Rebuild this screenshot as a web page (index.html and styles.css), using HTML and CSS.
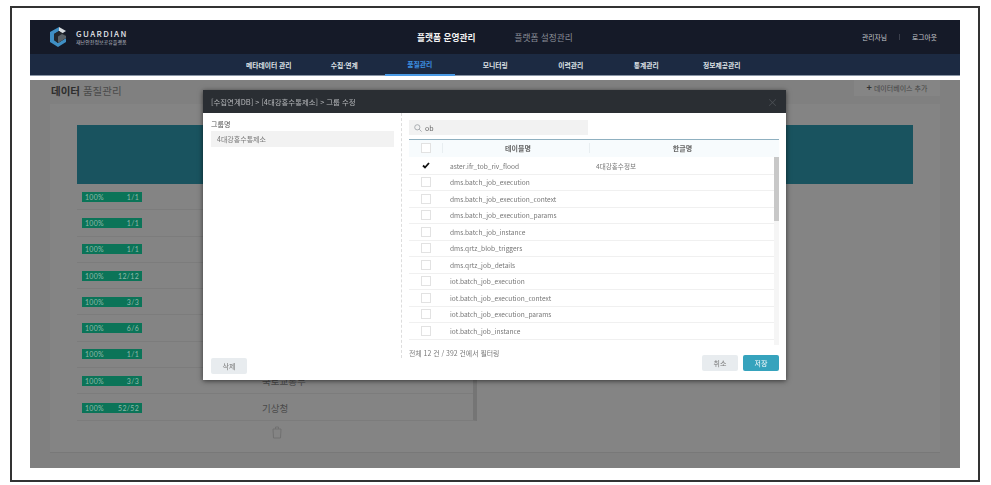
FILE: index.html
```html
<!DOCTYPE html>
<html lang="ko">
<head>
    <meta charset="UTF-8">
    <title>GUARDIAN</title>
    <link rel="stylesheet" href="styles.css">
</head>
<body>
    <div class="frame">
        <header class="top">
            <div class="logo">
                <svg width="18" height="20" viewBox="0 0 18 20">
                    <path d="M10 0 L1 5 V15 L9 20 L17 15 V11 L9 16 L5 13 V7 L10 4 Z" fill="#3f8fc4"/>
                    <path d="M10 0 L17 4 L13 6.5 L10 4 Z" fill="#d8dde0"/>
                    <path d="M5 7 L10 4 L17 8 V11 L9 16 L5 13 Z" fill="#23272c"/>
                    <path d="M9 9.5 L13 7 L17 9 V11 L9 16 Z" fill="#5a6268"/>
                </svg>
                <div class="logo-text">
                    <strong>GUARDIAN</strong>
                    <span>재난안전정보공유플랫폼</span>
                </div>
            </div>
            <div class="top-menu">
                <a class="on">플랫폼 운영관리</a>
                <a>플랫폼 설정관리</a>
            </div>
            <div class="user-menu">
                <a>관리자님</a>
                <i></i>
                <a>로그아웃</a>
            </div>
        </header>
        <nav class="gnb">
            <a>메타데이터 관리</a>
            <a>수집·연계</a>
            <a class="on">품질관리</a>
            <a>모니터링</a>
            <a>이력관리</a>
            <a>통계관리</a>
            <a>정보제공관리</a>
        </nav>
        <main class="content">
            <div class="title-row">
                <h1><b>데이터</b> 품질관리</h1>
                <button class="add-btn"><b>+</b> 데이터베이스 추가</button>
            </div>
            <section class="panel">
                <div class="teal-head"></div>
                <div class="db-list">
                    <div class="db-row"><span class="badge"><span>100%</span><span>1/1</span></span></div>
                    <div class="db-row"><span class="badge"><span>100%</span><span>1/1</span></span></div>
                    <div class="db-row"><span class="badge"><span>100%</span><span>1/1</span></span></div>
                    <div class="db-row"><span class="badge"><span>100%</span><span>12/12</span></span></div>
                    <div class="db-row"><span class="badge"><span>100%</span><span>3/3</span></span></div>
                    <div class="db-row"><span class="badge"><span>100%</span><span>6/6</span></span></div>
                    <div class="db-row"><span class="badge"><span>100%</span><span>1/1</span></span></div>
                    <div class="db-row"><span class="badge"><span>100%</span><span>3/3</span></span><em>국토교통부</em></div>
                    <div class="db-row"><span class="badge"><span>100%</span><span>52/52</span></span><em>기상청</em></div>
                </div>
                <div class="trash">
                    <svg width="10" height="13" viewBox="0 0 10 13" fill="none" stroke="#707070" stroke-width="1">
                        <path d="M1 3 H9 L8.5 12 H1.5 Z"/>
                        <path d="M3.5 3 V1 H6.5 V3"/>
                    </svg>
                </div>
            </section>

            <div class="modal">
                <div class="modal-head">
                    <span>[수집연계DB] &gt; [4대강홍수통제소] &gt; 그룹 수정</span>
                    <span class="close">×</span>
                </div>
                <div class="modal-body">
                    <div class="group-side">
                        <label>그룹명</label>
                        <div class="group-name">4대강홍수통제소</div>
                        <button class="btn btn-del">삭제</button>
                    </div>
                    <div class="table-side">
                        <div class="search">
                            <svg width="8" height="8" viewBox="0 0 8 8" fill="none" stroke="#9aa0a4" stroke-width="0.8">
                                <circle cx="3.3" cy="3.3" r="2.6"/>
                                <path d="M5.2 5.2 L7.6 7.6"/>
                            </svg>
                            <span>ob</span>
                        </div>
                        <div class="thead">
                            <div class="c-check"><span class="check"></span></div>
                            <div class="c-name">테이블명</div>
                            <div class="c-kor">한글명</div>
                        </div>
                        <div class="tbody">
                            <div class="rows">
                                <div class="row">
                                    <div class="c-check">
                                        <svg width="8" height="7" viewBox="0 0 8 7" fill="none" stroke="#111" stroke-width="1.8"><path d="M1 3.5 L3 5.5 L7 1"/></svg>
                                    </div>
                                    <div class="c-name">aster.ifr_tob_riv_flood</div>
                                    <div class="c-kor">4대강홍수정보</div>
                                </div>
                                <div class="row"><div class="c-check"><span class="check"></span></div><div class="c-name">dms.batch_job_execution</div></div>
                                <div class="row"><div class="c-check"><span class="check"></span></div><div class="c-name">dms.batch_job_execution_context</div></div>
                                <div class="row"><div class="c-check"><span class="check"></span></div><div class="c-name">dms.batch_job_execution_params</div></div>
                                <div class="row"><div class="c-check"><span class="check"></span></div><div class="c-name">dms.batch_job_instance</div></div>
                                <div class="row"><div class="c-check"><span class="check"></span></div><div class="c-name">dms.qrtz_blob_triggers</div></div>
                                <div class="row"><div class="c-check"><span class="check"></span></div><div class="c-name">dms.qrtz_job_details</div></div>
                                <div class="row"><div class="c-check"><span class="check"></span></div><div class="c-name">iot.batch_job_execution</div></div>
                                <div class="row"><div class="c-check"><span class="check"></span></div><div class="c-name">iot.batch_job_execution_context</div></div>
                                <div class="row"><div class="c-check"><span class="check"></span></div><div class="c-name">iot.batch_job_execution_params</div></div>
                                <div class="row"><div class="c-check"><span class="check"></span></div><div class="c-name">iot.batch_job_instance</div></div>
                            </div>
                            <div class="scroll"><div class="thumb"></div></div>
                        </div>
                        <p class="count">전체 12 건 / 392 건에서 필터링</p>
                        <div class="actions">
                            <button class="btn">취소</button>
                            <button class="btn btn-save">저장</button>
                        </div>
                    </div>
                </div>
            </div>
        </main>
    </div>
</body>
</html>
```

FILE: styles.css
```css
* {
    box-sizing: border-box;
}

body {
    margin: 0;
    background-color: white;
    font-family: "Noto Sans CJK KR", "Noto Sans", sans-serif;
    color: #555;
}

.frame {
    width: 970px;
    height: 476px;
    margin: 6px 0 0 10px;
    padding: 12px 18px;
    border: 2px solid #333;
}

/* top bar */
.top {
    display: flex;
    align-items: center;
    height: 34px;
    background-color: #151a28;
    color: white;
}

.logo {
    display: flex;
    align-items: center;
    gap: 9px;
    width: 387px;
    padding-left: 19px;
}

.logo-text {
    display: flex;
    flex-direction: column;
    line-height: 1;
}

.logo-text strong {
    font-size: 8px;
    font-weight: 500;
    letter-spacing: 1.4px;
    color: #e4e6ea;
}

.logo-text span {
    font-size: 5px;
    color: #b9bdc4;
    margin-top: 1px;
}

.top-menu {
    display: flex;
    gap: 39px;
    font-size: 8.7px;
    color: #8b8f98;
}

.top-menu .on {
    font-weight: bold;
    color: #f2f2f2;
}

.user-menu {
    display: flex;
    align-items: center;
    margin-left: auto;
    padding-right: 23px;
    font-size: 6.8px;
    color: #c5c8cd;
}

.user-menu i {
    width: 1px;
    height: 6px;
    margin: 0 12px;
    background-color: #3a3f4c;
}

/* menu bar */
.gnb {
    display: grid;
    grid-template-columns: repeat(7, 75.5px);
    height: 22px;
    padding-left: 201px;
    background-color: #1c2a42;
    border-bottom: 1px solid #8a96a6;
    font-size: 6.8px;
    font-weight: bold;
    color: #dfe2e6;
}

.gnb a {
    display: flex;
    align-items: center;
    justify-content: center;
    margin: 0 3px;
}

.gnb .on {
    color: #3c8fe0;
    border-bottom: 2px solid #4a9be6;
    margin-bottom: -1px;
}

/* page behind the dialog */
.content {
    position: relative;
    height: 388px;
    margin-top: 4px;
    background-color: #808080;
}

.title-row {
    display: flex;
    justify-content: space-between;
    height: 24px;
    padding: 0 20px 0 21px;
}

.title-row h1 {
    margin: 3px 0 0;
    font-size: 10.5px;
    font-weight: normal;
    line-height: 16px;
    color: #4a4a4a;
}

.title-row h1 b {
    color: #2e2e2e;
}

.add-btn {
    width: 86px;
    height: 16px;
    padding: 0;
    border: none;
    background-color: #858585;
    font: inherit;
    font-size: 7px;
    color: #444;
}

.add-btn b {
    color: #333;
    font-size: 9px;
    line-height: 7px;
}

.panel {
    width: 890px;
    height: 349px;
    margin-left: 20px;
    padding: 21px 27px 0;
    background-color: #848484;
    border-bottom: 1px solid #787878;
}

.teal-head {
    height: 59px;
    background-color: #19535f;
}

.db-list {
    width: 400px;
    height: 237px;
    border-right: 4px solid #757575;
    border-bottom: 1px solid #7c7c7c;
}

.db-row {
    display: flex;
    align-items: center;
    height: 26.3px;
    padding-left: 5px;
    border-bottom: 1px solid #7c7c7c;
}

.db-row:last-child {
    border-bottom: none;
}

.db-row em {
    margin-left: 120px;
    font-size: 9.5px;
    font-style: normal;
    color: #4a4a4a;
}

.badge {
    display: flex;
    justify-content: space-between;
    width: 60px;
    height: 10px;
    padding: 0 3px;
    background-color: #0b7458;
    font-family: "Lato", sans-serif;
    font-size: 7px;
    line-height: 10px;
    letter-spacing: 0.3px;
    color: #8fb8aa;
}

.trash {
    width: 400px;
    padding-top: 5px;
}

.trash svg {
    display: block;
    margin: 0 auto;
}

/* dialog */
.modal {
    position: absolute;
    left: 173px;
    top: 10px;
    width: 583px;
    height: 290px;
    background-color: white;
    box-shadow: 0 1px 5px rgba(0, 0, 0, 0.6);
    will-change: transform;
}

.modal-head {
    display: flex;
    justify-content: space-between;
    align-items: center;
    height: 23px;
    padding: 0 8px;
    background-color: #2a2e33;
    font-size: 7.4px;
    color: #b5b7ba;
}

.close {
    font-size: 11px;
    color: #4b4f54;
}

.modal-body {
    display: flex;
    height: 267px;
}

.group-side {
    position: relative;
    width: 198px;
    padding: 6px 7px 0 8px;
}

.group-side label {
    display: block;
    height: 12px;
    font-size: 7px;
    line-height: 10px;
    color: #555;
}

.group-name {
    height: 16px;
    padding-left: 6px;
    background-color: #f2f2f2;
    font-size: 7px;
    line-height: 16px;
    color: #777;
}

.btn {
    width: 36px;
    height: 16px;
    padding: 0;
    border: none;
    border-radius: 2px;
    background-color: #e8ecef;
    font: inherit;
    font-size: 7px;
    color: #777;
}

.btn-del {
    position: absolute;
    left: 8px;
    top: 245px;
}

.btn-save {
    background-color: #36a3bd;
    color: white;
}

.table-side {
    flex-grow: 1;
    height: 245px;
    padding: 7px 7px 0 7px;
    border-left: 1px dashed #ddd;
}

.search {
    display: flex;
    align-items: center;
    gap: 3px;
    width: 179px;
    height: 15px;
    padding-left: 5px;
    background-color: #f2f2f2;
    font-size: 7px;
    color: #666;
}

.thead {
    display: flex;
    align-items: center;
    height: 18px;
    margin-top: 4px;
    padding-bottom: 2px;
    background-color: #f7fbfd;
    border-top: 1px solid #8fb0c0;
    font-size: 7px;
    font-weight: bold;
    color: #666;
}

.c-check {
    display: flex;
    justify-content: center;
    align-items: center;
    flex: none;
    width: 33px;
}

.c-name {
    flex: none;
    width: 147px;
    padding-left: 8px;
}

.c-kor {
    flex-grow: 1;
    padding-left: 7px;
}

.thead .c-name {
    text-align: center;
    padding-left: 4px;
    border-left: 1px solid #e8eef1;
}

.thead .c-kor {
    text-align: center;
    padding: 0 4px 0 0;
    border-left: 1px solid #e8eef1;
}

.check {
    display: block;
    width: 10px;
    height: 10px;
    background-color: white;
    border: 1px solid #e2e2e2;
}

.tbody {
    display: flex;
    height: 188px;
}

.rows {
    flex-grow: 1;
    padding-top: 1px;
}

.row {
    display: flex;
    align-items: center;
    height: 16.5px;
    border-bottom: 1px solid #f0f0f0;
    font-size: 6.6px;
    color: #777;
}

.scroll {
    flex: none;
    width: 5px;
    height: 188px;
    background-color: #f5f5f5;
}

.thumb {
    height: 64px;
    background-color: #c8c8c8;
}

.count {
    margin: 3px 0 0;
    font-size: 6.9px;
    line-height: 10px;
    color: #777;
}

.actions {
    display: flex;
    justify-content: flex-end;
    gap: 5px;
    margin-top: -3px;
}
```
